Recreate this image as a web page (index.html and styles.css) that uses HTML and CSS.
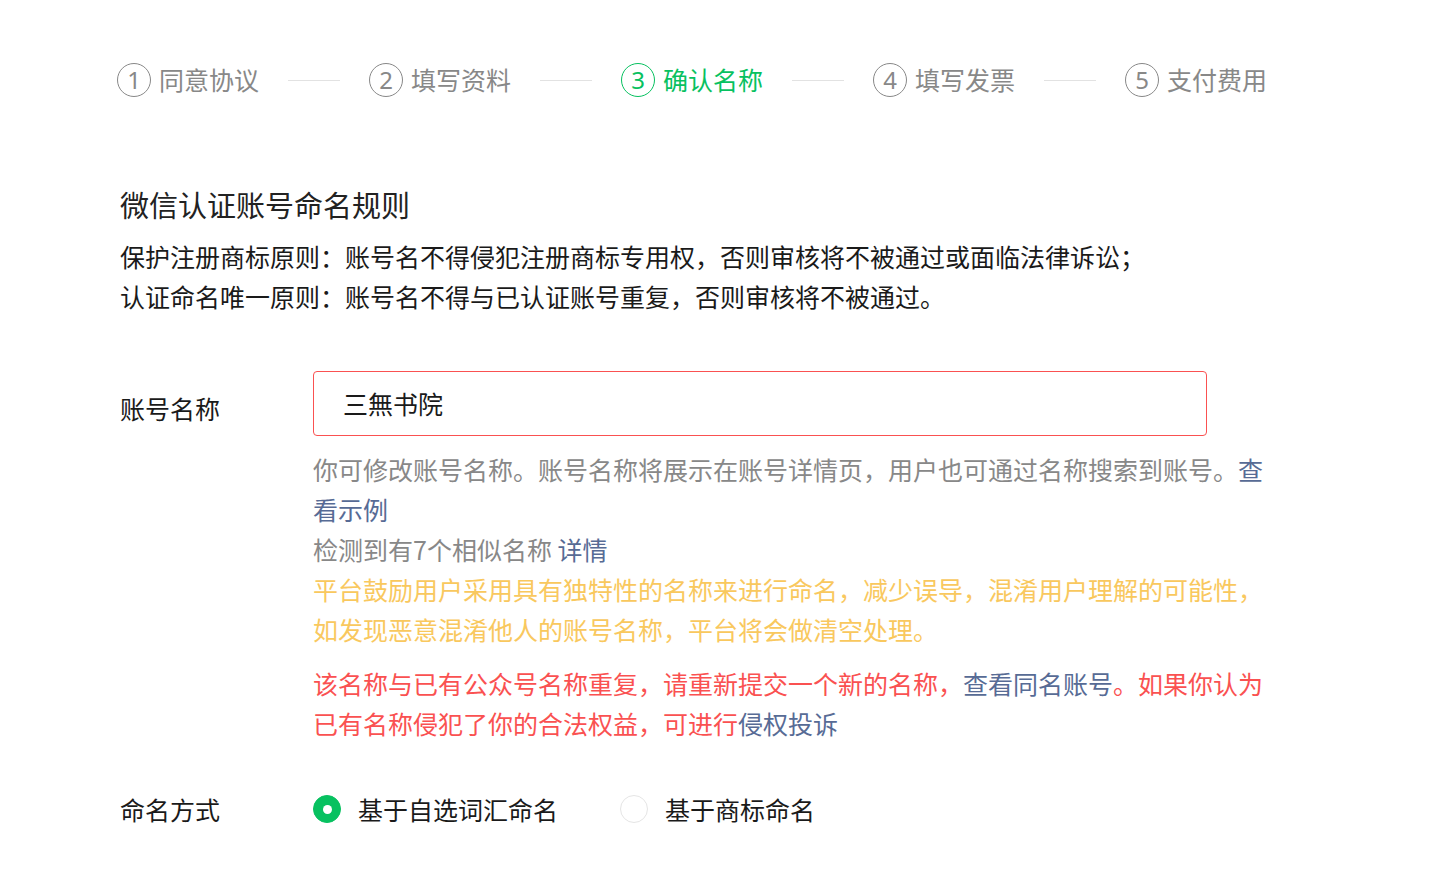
FILE: index.html
```html
<!DOCTYPE html>
<html lang="zh-CN">
<head>
<meta charset="utf-8">
<title>确认名称</title>
<link rel="stylesheet" href="styles.css">
</head>
<body>
<div class="page">
  <div class="steps">
    <div class="step"><span class="num">1</span><span class="label">同意协议</span></div>
    <div class="sep"></div>
    <div class="step"><span class="num">2</span><span class="label">填写资料</span></div>
    <div class="sep"></div>
    <div class="step active"><span class="num">3</span><span class="label">确认名称</span></div>
    <div class="sep"></div>
    <div class="step"><span class="num">4</span><span class="label">填写发票</span></div>
    <div class="sep"></div>
    <div class="step"><span class="num">5</span><span class="label">支付费用</span></div>
  </div>

  <h2 class="title">微信认证账号命名规则</h2>
  <div class="rules">
    <p>保护注册商标原则：账号名不得侵犯注册商标专用权，否则审核将不被通过或面临法律诉讼；</p>
    <p>认证命名唯一原则：账号名不得与已认证账号重复，否则审核将不被通过。</p>
  </div>

  <div class="form-row name-row">
    <div class="form-label name-label">账号名称</div>
    <div class="form-body">
      <div class="input">三無书院</div>
      <div class="help">
        <p class="gray">你可修改账号名称。账号名称将展示在账号详情页，用户也可通过名称搜索到账号。<a class="link">查看示例</a></p>
        <p class="gray">检测到有7个相似名称 <a class="link">详情</a></p>
        <p class="warn">平台鼓励用户采用具有独特性的名称来进行命名，减少误导，混淆用户理解的可能性，如发现恶意混淆他人的账号名称，平台将会做清空处理。</p>
        <p class="error">该名称与已有公众号名称重复，请重新提交一个新的名称，<a class="link">查看同名账号</a>。如果你认为已有名称侵犯了你的合法权益，可进行<a class="link">侵权投诉</a></p>
      </div>
    </div>
  </div>

  <div class="form-row radio-row">
    <div class="form-label">命名方式</div>
    <div class="form-body radios">
      <label class="radio checked"><span class="dot"></span>基于自选词汇命名</label>
      <label class="radio"><span class="dot"></span>基于商标命名</label>
    </div>
  </div>
</div>
</body>
</html>
```
FILE: styles.css
```css
* { box-sizing: border-box; }
html, body { margin: 0; padding: 0; background: #fff; }
body {
  font-family: "Noto Sans CJK SC", "Noto Sans", sans-serif;
  color: #1a1a1a;
  font-size: 25px;
}
p { margin: 0; }
.page { padding: 63px 0 0 120px; }

.steps { display: flex; align-items: center; margin-left: -3px; height: 34px; }
.step { display: flex; align-items: center; color: #888; }
.step .num {
  width: 34px; height: 34px; border: 1px solid #888; border-radius: 50%;
  display: flex; align-items: center; justify-content: center;
  font-size: 24px; line-height: 1; margin-right: 8px;
  font-family: "Noto Sans", "Noto Sans CJK SC", sans-serif;
}
.step .label { font-size: 25px; line-height: 32px; padding-bottom: 2px; width: 101px; white-space: nowrap; }
.step.active { color: #07c160; }
.step.active .num { border-color: #07c160; }
.sep { width: 52px; height: 1px; background: #e2e2e2; margin: 0 29px 0 28px; }

.title { font-size: 29px; font-weight: normal; line-height: 40px; margin: 87px 0 0; color: #222; }
.rules { margin-top: 12px; line-height: 40px; color: #1a1a1a; }

.form-row { display: flex; }
.form-label { width: 193px; flex: none; line-height: 40px; }
.name-label { padding-top: 17px; }
.form-body { width: 952px; }

.name-row { margin-top: 55px; }
.input {
  width: 894px; height: 65px; border: 1px solid #fa5151; border-radius: 4px;
  padding: 0 0 2px 29px; display: flex; align-items: center; color: #1a1a1a;
}
.help { margin-top: 13px; line-height: 40px; }
.gray { color: #888; }
.warn { color: #f9c85e; }
.error { color: #fa5151; margin-top: 14px; }
.link { color: #576b95; text-decoration: none; }

.radio-row { margin-top: 46px; align-items: center; }
.radios { display: flex; align-items: center; line-height: 38px; }
.radio { display: flex; align-items: center; color: #1a1a1a; margin-right: 62px; }
.radio .dot {
  width: 28px; height: 28px; border-radius: 50%; border: 1px solid #e5e5e5;
  margin-right: 17px; display: flex; align-items: center; justify-content: center;
}
.radio.checked .dot { background: #07c160; border-color: #07c160; }
.radio.checked .dot::after {
  content: ""; width: 9px; height: 9px; border-radius: 50%; background: #fff;
}
```
